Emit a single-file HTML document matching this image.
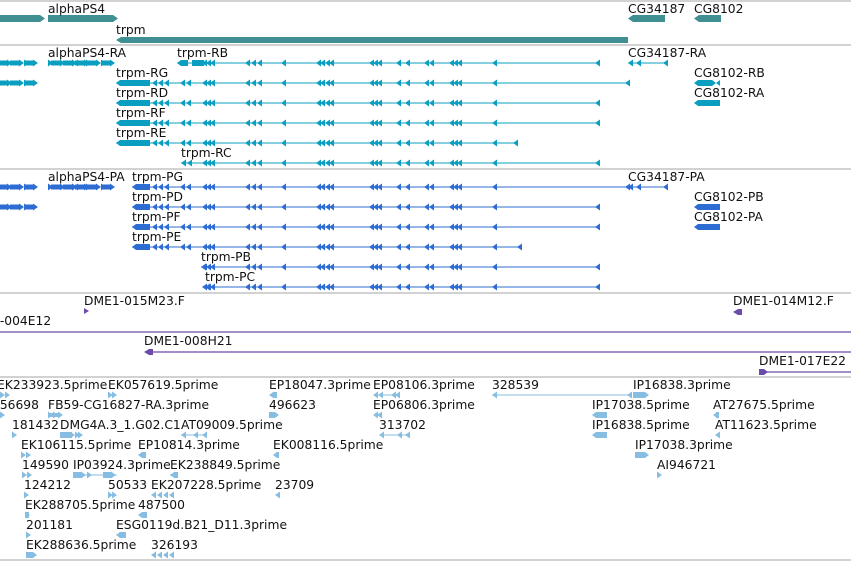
<!DOCTYPE html>
<html><head><meta charset="utf-8"><style>
html,body{margin:0;padding:0;background:#fff;width:851px;height:561px;overflow:hidden}
svg{display:block}
text{font-family:"DejaVu Sans","Liberation Sans",sans-serif;font-size:12.3px;fill:#111}
</style></head><body>
<svg width="851" height="561" viewBox="0 0 851 561" xmlns="http://www.w3.org/2000/svg">
<defs>
<path id="la" d="M0,0 L5,-3.5 L5,3.5 Z"/>
<path id="ra" d="M0,-3.5 L5,0 L0,3.5 Z"/>
<g id="arrA"><use href="#la" x="152"/><use href="#la" x="158"/><use href="#la" x="164"/><use href="#la" x="180"/><use href="#la" x="186"/></g>
<g id="arrB">
<use href="#la" x="202"/><use href="#la" x="206"/><use href="#la" x="210"/>
<use href="#la" x="245"/><use href="#la" x="251"/><use href="#la" x="257"/>
<use href="#la" x="281"/>
<use href="#la" x="316"/><use href="#la" x="320"/><use href="#la" x="325"/><use href="#la" x="329"/>
<use href="#la" x="369"/><use href="#la" x="373"/><use href="#la" x="377"/>
<use href="#la" x="396"/><use href="#la" x="405"/>
<use href="#la" x="424"/><use href="#la" x="429"/>
<use href="#la" x="449"/><use href="#la" x="453"/><use href="#la" x="457"/>
<use href="#la" x="492"/>
</g>
<g id="fwd">
<use href="#ra" x="0"/><rect x="3" y="-2.5" width="10" height="5"/><use href="#ra" x="12"/><rect x="15" y="-2.5" width="10" height="5"/><use href="#ra" x="24"/><use href="#ra" x="29"/><rect x="30" y="-2.5" width="8" height="5"/><use href="#ra" x="38"/>
</g>
</defs>
<g stroke="#c4c4c4" stroke-width="1.5">
<line x1="0" y1="1" x2="851" y2="1"/><line x1="0" y1="45" x2="851" y2="45"/>
<line x1="0" y1="169" x2="851" y2="169"/><line x1="0" y1="293" x2="851" y2="293"/>
<line x1="0" y1="377" x2="851" y2="377"/><line x1="0" y1="560" x2="851" y2="560"/>
</g>
<g fill="#3f8f93">
<path d="M0,15 H40 L45,18.5 L40,22 H0Z"/>
<path d="M48,15 H113 L118,18.5 L113,22 H48Z"/>
<path d="M116,40 L121,37 H628 V43 H121Z"/>
<path d="M628,18.5 L633,15 H665 V22 H633Z"/>
<path d="M694,18.5 L699,15 H721 V22 H699Z"/>
</g>
<text x="48" y="13">alphaPS4</text><text x="116" y="34">trpm</text>
<text x="628" y="13">CG34187</text><text x="694" y="13">CG8102</text>
<g fill="#0a9fc0" stroke="#0a9fc0">
<g stroke="none">
<use href="#fwd" x="-5" y="63"/><use href="#fwd" x="48" y="63"/><use href="#fwd" x="72" y="63"/>
<use href="#fwd" x="-5" y="83"/>
</g>
<line x1="177" y1="63" x2="600" y2="63" stroke-width="1"/>
<g stroke="none"><path d="M177,63 L181,60 H188 V66 H181Z"/><rect x="192" y="60" width="12" height="6"/><use href="#arrB" y="63"/><use href="#la" x="595" y="63"/></g>
<line x1="628" y1="63" x2="668" y2="63" stroke-width="1"/>
<g stroke="none"><use href="#la" x="628" y="63"/><use href="#la" x="636" y="63"/><use href="#la" x="663" y="63"/></g>
<line x1="116" y1="83" x2="630" y2="83"/><line x1="116" y1="103" x2="600" y2="103"/>
<line x1="116" y1="123" x2="600" y2="123"/><line x1="116" y1="143" x2="518" y2="143"/>
<line x1="181" y1="163" x2="600" y2="163"/>
<g stroke="none">
<path d="M116,83 L120,80 H150 V86 H120Z"/><use href="#arrA" y="83"/><use href="#arrB" y="83"/><use href="#la" x="625" y="83"/>
<path d="M116,103 L120,100 H150 V106 H120Z"/><use href="#arrA" y="103"/><use href="#arrB" y="103"/><use href="#la" x="595" y="103"/>
<path d="M116,123 L120,120 H150 V126 H120Z"/><use href="#arrA" y="123"/><use href="#arrB" y="123"/><use href="#la" x="595" y="123"/>
<path d="M116,143 L120,140 H150 V146 H120Z"/><use href="#arrA" y="143"/><use href="#arrB" y="143"/><use href="#la" x="513" y="143"/>
<use href="#la" x="181" y="163"/><use href="#la" x="187" y="163"/><use href="#arrB" y="163"/><use href="#la" x="595" y="163"/>
<path d="M694,83 L698,80 H712 L716,83 L720,80 V86 L716,83 L712,86 H698Z"/>
<path d="M694,103 L698,100 H720 V106 H698Z"/>
</g>
</g>
<text x="48" y="57">alphaPS4-RA</text><text x="177" y="57">trpm-RB</text><text x="628" y="57">CG34187-RA</text>
<text x="116" y="77">trpm-RG</text><text x="694" y="77">CG8102-RB</text>
<text x="116" y="97">trpm-RD</text><text x="694" y="97">CG8102-RA</text>
<text x="116" y="117">trpm-RF</text><text x="116" y="137">trpm-RE</text><text x="181" y="157">trpm-RC</text>
<g fill="#2d6cd2" stroke="#2d6cd2">
<g stroke="none">
<use href="#fwd" x="-5" y="187"/><use href="#fwd" x="48" y="187"/><use href="#fwd" x="72" y="187"/>
<use href="#fwd" x="-5" y="207"/>
</g>
<line x1="132" y1="187" x2="630" y2="187"/><line x1="132" y1="207" x2="600" y2="207"/>
<line x1="132" y1="227" x2="600" y2="227"/><line x1="132" y1="247" x2="522" y2="247"/>
<line x1="201" y1="267" x2="600" y2="267"/><line x1="205" y1="287" x2="600" y2="287"/>
<line x1="628" y1="187" x2="668" y2="187"/>
<g stroke="none">
<path d="M132,187 L136,184 H150 V190 H136Z"/><use href="#arrA" y="187"/><use href="#arrB" y="187"/><use href="#la" x="625" y="187"/>
<path d="M132,207 L136,204 H150 V210 H136Z"/><use href="#arrA" y="207"/><use href="#arrB" y="207"/><use href="#la" x="595" y="207"/>
<path d="M132,227 L136,224 H150 V230 H136Z"/><use href="#arrA" y="227"/><use href="#arrB" y="227"/><use href="#la" x="595" y="227"/>
<path d="M132,247 L136,244 H150 V250 H136Z"/><use href="#arrA" y="247"/><use href="#arrB" y="247"/><use href="#la" x="517" y="247"/>
<use href="#la" x="201" y="267"/><use href="#arrB" y="267"/><use href="#la" x="595" y="267"/>
<use href="#la" x="205" y="287"/><use href="#arrB" y="287"/><use href="#la" x="595" y="287"/>
<use href="#la" x="628" y="187"/><use href="#la" x="636" y="187"/><use href="#la" x="663" y="187"/>
<path d="M694,207 L698,204 H720 V210 H698Z"/>
<path d="M694,227 L698,224 H720 V230 H698Z"/>
</g>
</g>
<text x="48" y="181">alphaPS4-PA</text><text x="132" y="181">trpm-PG</text><text x="628" y="181">CG34187-PA</text>
<text x="132" y="201">trpm-PD</text><text x="694" y="201">CG8102-PB</text>
<text x="132" y="221">trpm-PF</text><text x="694" y="221">CG8102-PA</text>
<text x="132" y="241">trpm-PE</text><text x="201" y="261">trpm-PB</text><text x="205" y="281">trpm-PC</text>
<g fill="#6b4ca8" stroke="#6b4ca8" stroke-width="1.3">
<line x1="0" y1="332" x2="851" y2="332"/>
<line x1="148" y1="352" x2="851" y2="352"/>
<line x1="764" y1="372" x2="851" y2="372"/>
<g stroke="none">
<path d="M84,308 L89,311 L84,314Z"/>
<path d="M733,312 L738,309 H742 V315 H738Z"/>
<path d="M144,352 L149,349 H153 V355 H149Z"/>
<path d="M759,369 H764 L768,372 L764,375 H759Z"/>
</g>
</g>
<text x="84" y="305">DME1-015M23.F</text><text x="-8" y="325">1-004E12</text>
<text x="733" y="305">DME1-014M12.F</text><text x="144" y="345">DME1-008H21</text>
<text x="759" y="365">DME1-017E22</text>
<g fill="#86bde0" stroke="#86bde0" stroke-width="1">
<line x1="492" y1="395" x2="630" y2="395"/>
<line x1="383" y1="395" x2="393" y2="395"/>
<line x1="181" y1="435" x2="207" y2="435"/>
<line x1="383" y1="435" x2="410" y2="435"/>
<line x1="73" y1="475" x2="117" y2="475"/>
<line x1="170" y1="475" x2="178" y2="475"/>
<g stroke="none">
<use href="#ra" x="0" y="395"/><use href="#ra" x="5" y="395"/>
<use href="#ra" x="108" y="395"/><use href="#ra" x="112" y="395"/>
<use href="#la" x="269" y="395"/><rect x="273" y="392" width="4" height="6"/>
<use href="#la" x="373" y="395"/><use href="#la" x="378" y="395"/><use href="#la" x="391" y="395"/><use href="#la" x="395" y="395"/>
<use href="#la" x="492" y="395"/>
<use href="#la" x="627" y="395"/><path d="M633,392 H645 L649,395 L645,398 H633Z"/>
<use href="#ra" x="0" y="415"/>
<use href="#ra" x="48" y="415"/><use href="#ra" x="53" y="415"/><rect x="48" y="413" width="10" height="4"/><use href="#ra" x="58" y="415"/>
<path d="M269,412 H275 L279,415 L275,418 H269Z"/>
<use href="#la" x="373" y="415"/><use href="#la" x="377" y="415"/>
<path d="M592,415 L596,412 H607 V418 H596Z"/>
<use href="#la" x="713" y="415"/><rect x="716" y="412" width="3" height="6"/>
<use href="#ra" x="12" y="435"/>
<rect x="60" y="432" width="12" height="6"/><use href="#ra" x="70" y="435"/><use href="#ra" x="75" y="435"/><use href="#ra" x="78" y="435"/>
<use href="#la" x="181" y="435"/><use href="#la" x="193" y="435"/><use href="#la" x="202" y="435"/>
<use href="#la" x="379" y="435"/><use href="#la" x="397" y="435"/><use href="#la" x="405" y="435"/>
<path d="M592,435 L596,432 H607 V438 H596Z"/>
<use href="#la" x="715" y="435"/>
<use href="#ra" x="21" y="455"/><use href="#ra" x="26" y="455"/>
<path d="M138,455 L142,452 H146 V458 H142Z"/>
<path d="M273,455 L277,452 H279 V458 H277Z"/>
<path d="M635,452 H645 L649,455 L645,458 H635Z"/>
<use href="#ra" x="22" y="475"/><use href="#ra" x="27" y="475"/>
<rect x="73" y="472" width="8" height="6"/><use href="#ra" x="81" y="475"/><use href="#ra" x="87" y="475"/><rect x="103" y="472" width="8" height="6"/><use href="#ra" x="111" y="475"/>
<use href="#la" x="170" y="475"/><rect x="175" y="472" width="3" height="6"/>
<use href="#ra" x="657" y="475"/>
<use href="#ra" x="24" y="495"/>
<use href="#ra" x="108" y="495"/><use href="#ra" x="112" y="495"/>
<use href="#la" x="151" y="495"/><use href="#la" x="157" y="495"/><use href="#la" x="163" y="495"/><use href="#la" x="169" y="495"/>
<use href="#la" x="275" y="495"/>
<use href="#ra" x="25" y="515"/><rect x="25" y="512" width="4" height="6"/>
<path d="M138,515 L142,512 H147 V518 H142Z"/>
<use href="#ra" x="26" y="535"/>
<path d="M116,535 L120,532 H126 V538 H120Z"/>
<path d="M26,552 H33 L37,555 L33,558 H26Z"/>
<use href="#la" x="151" y="555"/><use href="#la" x="157" y="555"/><use href="#la" x="163" y="555"/><use href="#la" x="169" y="555"/>
</g>
</g>
<text x="-3" y="389">EK233923.5prime</text><text x="108" y="389">EK057619.5prime</text>
<text x="269" y="389">EP18047.3prime</text><text x="373" y="389">EP08106.3prime</text>
<text x="492" y="389">328539</text><text x="633" y="389">IP16838.3prime</text>
<text x="-8" y="409">356698</text><text x="48" y="409">FB59-CG16827-RA.3prime</text>
<text x="269" y="409">496623</text><text x="373" y="409">EP06806.3prime</text>
<text x="592" y="409">IP17038.5prime</text><text x="713" y="409">AT27675.5prime</text>
<text x="12" y="429">181432</text><text x="60" y="429">DMG4A.3_1.G02.C1</text>
<text x="181" y="429">AT09009.5prime</text><text x="379" y="429">313702</text>
<text x="592" y="429">IP16838.5prime</text><text x="715" y="429">AT11623.5prime</text>
<text x="21" y="449">EK106115.5prime</text><text x="138" y="449">EP10814.3prime</text>
<text x="273" y="449">EK008116.5prime</text><text x="635" y="449">IP17038.3prime</text>
<text x="22" y="469">149590</text><text x="73" y="469">IP03924.3prime</text>
<text x="170" y="469">EK238849.5prime</text><text x="657" y="469">AI946721</text>
<text x="24" y="489">124212</text><text x="108" y="489">50533</text>
<text x="151" y="489">EK207228.5prime</text><text x="275" y="489">23709</text>
<text x="25" y="509">EK288705.5prime</text><text x="138" y="509">487500</text>
<text x="26" y="529">201181</text><text x="116" y="529">ESG0119d.B21_D11.3prime</text>
<text x="26" y="549">EK288636.5prime</text><text x="151" y="549">326193</text>
</svg>
</body></html>
